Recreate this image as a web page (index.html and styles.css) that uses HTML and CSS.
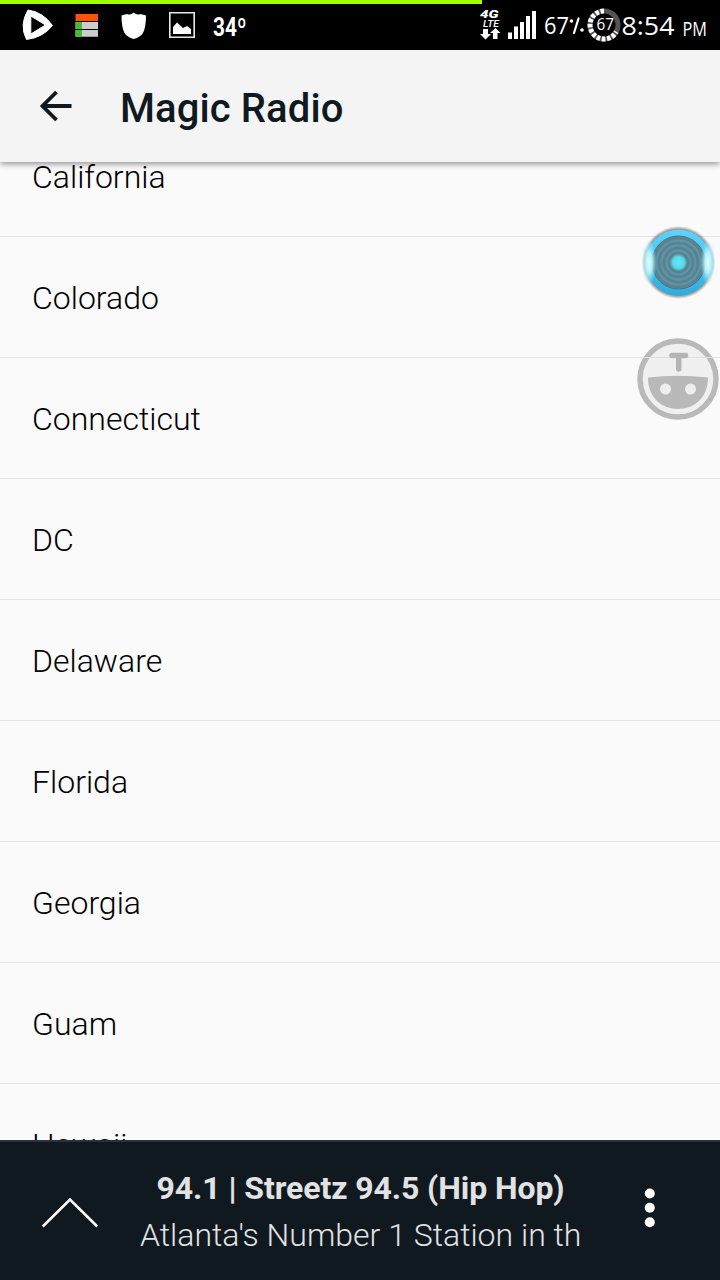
FILE: index.html
```html
<!DOCTYPE html>
<html lang="en">
<head>
<meta charset="utf-8">
<title>Magic Radio</title>
<link rel="stylesheet" href="styles.css">
</head>
<body>
<div class="screen">
  <div class="status">
    <div class="battery-line"></div>
    <svg class="status-icons" width="260" height="50" viewBox="0 0 260 50">
      <path fill="#fff" stroke="#fff" stroke-linejoin="round" fill-rule="evenodd" d="M28 10Q43 12 52.500 25.500Q43 37.500 26.500 39.500Q19 25 28 10ZM30.800 16V34L45.500 25Z"/>
      <path fill="#ff5208" d="M75.500 14h22.500v7H75.500z"/>
      <path fill="#ccc" d="M75.500 22h22.500v7H75.500zM75.500 30h22.500v6.800H75.500z"/>
      <path fill="#43bd32" d="M75.500 22h6.500v7h-6.500zM75.500 30h6.500v6.800h-6.500z"/>
      <path fill="#fff" d="M133.700 12.500Q136.500 15.500 140.500 14L146 15.500Q146 27 143 33Q140.500 37 133.700 39Q127 37 124.500 33Q121.500 27 121.500 15.500L127 14Q131 15.500 133.700 12.500Z"/>
      <path fill="none" stroke="#e8e8e8" stroke-width="1.600" d="M169.800 12.800h24.400v24.400h-24.400z"/>
      <path fill="#fff" d="M173 34v-7l4-4.500 6 5.500 4-2 4 3v5z"/>
      <text class="temp" x="213" y="36" textLength="33.500" lengthAdjust="spacingAndGlyphs">34º</text>
    </svg>
    <svg class="status-icons" width="250" height="50" viewBox="470 0 250 50">
      <text class="four-g" x="480" y="18.300" textLength="18.500" lengthAdjust="spacingAndGlyphs">4G</text>
      <text class="lte" x="483" y="27" textLength="16" lengthAdjust="spacingAndGlyphs">LTE</text>
      <path fill="#fff" d="M483 29h5v5h3l-5.500 5.500L480 34h3zM493 39v-6h-3l5.500-5 5 5h-3v6z"/>
      <path fill="#fff" d="M508 32.500h4V39h-4zM514 26.500h4V39h-4zM520 22h4v17h-4zM526 16h4v23h-4zM532 11h4v28h-4z"/>
      <text class="hand" x="544" y="34" font-size="23.500" textLength="25" lengthAdjust="spacingAndGlyphs">67</text>
      <path class="percent" d="M578.500 18.500L574 33"/>
      <circle cx="571.500" cy="21" r="1.800" fill="#fff"/><circle cx="582" cy="30" r="1.800" fill="#fff"/>
      <circle cx="604" cy="25" r="14" fill="none" stroke="#555" stroke-width="5"/>
      <path d="M604 11A14 14 0 1 0 616.300 31.700" fill="none" stroke="#fff" stroke-width="5" stroke-dasharray="3.500 1.700"/>
      <text class="hand" x="596.500" y="29.500" font-size="16" textLength="17.500" lengthAdjust="spacingAndGlyphs">67</text>
      <text class="hand" x="621.500" y="35" font-size="25.500" textLength="53" lengthAdjust="spacingAndGlyphs">8:54</text>
      <text class="hand" x="682.500" y="36" font-size="20" textLength="24.500" lengthAdjust="spacingAndGlyphs">PM</text>
    </svg>
  </div>
  <header class="toolbar">
    <svg class="back" width="34" height="34" viewBox="0 0 34 34"><path d="M32.500 17H3.500M17.500 3L3.500 17L17.500 31"/></svg>
    <h1 class="title">Magic Radio</h1>
  </header>
  <main class="viewport">
    <ul class="states">
      <li class="state">California</li>
      <li class="state">Colorado</li>
      <li class="state">Connecticut</li>
      <li class="state">DC</li>
      <li class="state">Delaware</li>
      <li class="state">Florida</li>
      <li class="state">Georgia</li>
      <li class="state">Guam</li>
      <li class="state">Hawaii</li>
    </ul>
  </main>
  <footer class="player">
    <svg class="expand" width="60" height="34" viewBox="0 0 60 34"><path d="M2.700 30.500L30 3.500L57.300 30.500"/></svg>
    <div class="track">
      <div class="station">94.1 | Streetz 94.5 (Hip Hop)</div>
      <div class="tagline">Atlanta's Number 1 Station in th</div>
    </div>
    <svg class="more" width="20" height="44" viewBox="0 0 20 44"><circle cx="9.800" cy="7.500" r="5"/><circle cx="9.800" cy="21.800" r="5"/><circle cx="9.800" cy="36.300" r="5"/></svg>
  </footer>
  <svg class="orb" width="80" height="80" viewBox="638 222 80 80">
    <defs>
      <linearGradient id="rim" x1="0" y1="0" x2="0" y2="1"><stop offset="0" stop-color="#5ed3ff"/><stop offset="1" stop-color="#2daedc"/></linearGradient>
      <radialGradient id="shine"><stop offset="0" stop-color="#e0ffff"/><stop offset=".45" stop-color="#c4f8ff" stop-opacity=".85"/><stop offset="1" stop-color="#8eeaff" stop-opacity="0"/></radialGradient>
      <radialGradient id="core"><stop offset="0" stop-color="#60e8f7"/><stop offset=".65" stop-color="#55dbee"/><stop offset="1" stop-color="#4bb8cc" stop-opacity="0"/></radialGradient>
      <radialGradient id="halo"><stop offset=".86" stop-color="#333" stop-opacity=".75"/><stop offset="1" stop-color="#333" stop-opacity="0"/></radialGradient>
    </defs>
    <circle cx="678.500" cy="262.500" r="36.500" fill="url(#halo)"/>
    <circle cx="678.500" cy="262.500" r="33" fill="url(#rim)"/>
    <circle cx="678.500" cy="262.500" r="26.500" fill="#5597ab" stroke="#49727f"/>
    <g fill="none" stroke="#617f89" stroke-width="2.500"><circle cx="678.500" cy="262.500" r="9.500"/><circle cx="678.500" cy="262.500" r="14.500"/><circle cx="678.500" cy="262.500" r="19.500"/><circle cx="678.500" cy="262.500" r="24.500"/></g>
    <ellipse cx="649" cy="262.500" rx="7.500" ry="23" fill="url(#shine)"/>
    <ellipse cx="708" cy="262.500" rx="7.500" ry="23" fill="url(#shine)"/>
    <circle cx="678.500" cy="262.500" r="9" fill="url(#core)"/>
  </svg>
  <svg class="robot" width="84" height="84" viewBox="636 337 84 84">
    <circle cx="678" cy="379" r="38" fill="#eee" fill-opacity=".9" stroke="#b9b9b9" stroke-width="5.500"/>
    <path d="M643 357.500h70" stroke="#dedede"/>
    <path d="M648 377.500Q678 374 708 377.500C708 398 694 409 678 409S648 398 648 377.500Z" fill="#b9b9b9"/>
    <path d="M672 355.500h13.500M678.700 356v13" fill="none" stroke="#b5b5b5" stroke-width="5.500" stroke-linecap="round"/>
    <circle cx="665.500" cy="389" r="5.500" fill="#eee"/><circle cx="690.500" cy="389" r="5.500" fill="#eee"/>
  </svg>
</div>
</body>
</html>
```
FILE: styles.css
```css
* { box-sizing: border-box; }
body { margin: 0; font-family: Roboto, "Liberation Sans", sans-serif; }
.screen {
  position: relative;
  display: flex;
  flex-direction: column;
  width: 720px;
  height: 1280px;
  overflow: hidden;
  background: #fafafa;
}
.status {
  position: relative;
  display: flex;
  flex: none;
  justify-content: space-between;
  height: 50px;
  background: #000;
}
.battery-line {
  position: absolute;
  top: 0;
  left: 0;
  width: 482px;
  height: 4px;
  background: #9dff00;
}
.status-icons { display: block; }
.temp { fill: #fff; font: 700 26px Roboto, sans-serif; }
.four-g { fill: #fff; font: italic 900 11.500px Roboto, sans-serif; }
.lte { fill: #fff; font: italic 500 9.500px Roboto, sans-serif; }
.hand { fill: #fff; font-family: "Open Sans", sans-serif; }
.percent { stroke: #fff; stroke-width: 2.200; stroke-linecap: round; }
.toolbar {
  position: relative;
  z-index: 1;
  display: flex;
  flex: none;
  align-items: center;
  gap: 47px;
  height: 112px;
  padding-left: 39px;
  background: #f4f4f4;
  box-shadow: 0 2px 6px rgba(0, 0, 0, .42);
}
.back { fill: none; stroke: #111920; stroke-width: 3.800; }
.title {
  margin: 0;
  padding-top: 6px;
  color: #111920;
  font-size: 40px;
  font-weight: 500;
  line-height: 48px;
  letter-spacing: .1px;
  white-space: nowrap;
}
.viewport { flex: 1; min-height: 0; overflow: hidden; }
.states { margin: -46px 0 0; padding: 0; list-style: none; }
.state {
  display: flex;
  align-items: center;
  height: 121px;
  padding: 1px 32px 0;
  border-bottom: 1px solid #e4e4e4;
  color: #000;
  font-size: 32px;
  font-weight: 300;
}
.player {
  display: flex;
  flex: none;
  height: 140px;
  border-top: 2px solid #2b303c;
  background: #111920;
  color: #e1e2e3;
  padding-left: 40px;
}
.expand { flex: none; margin: 54px 40px 0 0; fill: none; stroke: #fff; stroke-width: 2.600; }
.track {
  flex: none;
  width: 441px;
  padding-top: 23px;
  overflow: hidden;
  font-size: 32px;
  line-height: 47px;
  white-space: nowrap;
}
.station { font-weight: 700; letter-spacing: -.08px; text-align: center; }
.tagline { font-weight: 300; }
.more { flex: none; margin: 44px 0 0 59px; fill: #fff; }
.orb { position: absolute; left: 638px; top: 222px; }
.robot { position: absolute; left: 636px; top: 337px; }
```
